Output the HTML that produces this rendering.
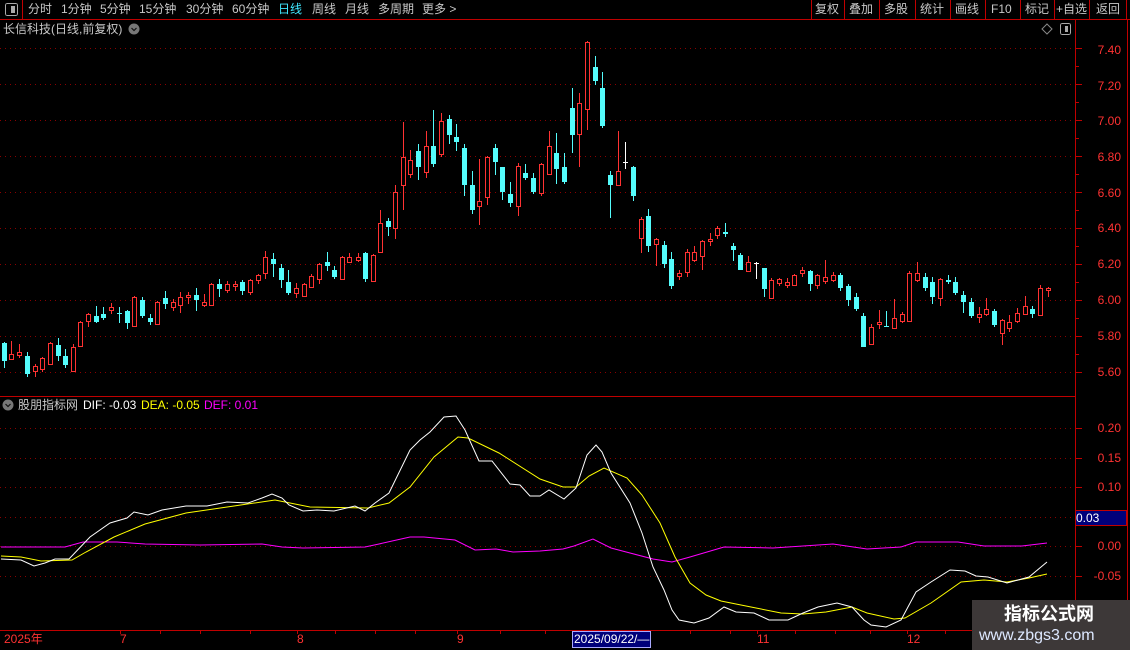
<!DOCTYPE html>
<html><head><meta charset="utf-8">
<style>
*{margin:0;padding:0;box-sizing:border-box}
body{width:1130px;height:650px;background:#000;overflow:hidden;position:relative;font-family:"Liberation Sans","Noto Sans CJK SC",sans-serif;font-size:12px;color:#c8c8c8}
.t{position:absolute;white-space:nowrap;line-height:14px}
svg{position:absolute;left:0;top:0}
.ax{position:absolute;right:9px;color:#ff3232;font-size:12px;line-height:14px}
</style></head><body>
<svg id="s" width="1130" height="650" xmlns="http://www.w3.org/2000/svg" shape-rendering="crispEdges">
<g stroke="#c00000" stroke-width="1" fill="none">
<line x1="0" y1="19.5" x2="1130" y2="19.5"/>
<line x1="0" y1="396.5" x2="1075" y2="396.5"/>
<line x1="0" y1="630.5" x2="1075" y2="630.5"/>
<line x1="1075.5" y1="20" x2="1075.5" y2="650"/>
<line x1="1127.5" y1="20" x2="1127.5" y2="650"/>
<line x1="22.5" y1="0" x2="22.5" y2="19"/>
<line x1="811.5" y1="0" x2="811.5" y2="19"/>
<line x1="844.5" y1="0" x2="844.5" y2="19"/>
<line x1="879.5" y1="0" x2="879.5" y2="19"/>
<line x1="915.5" y1="0" x2="915.5" y2="19"/>
<line x1="950.5" y1="0" x2="950.5" y2="19"/>
<line x1="985.5" y1="0" x2="985.5" y2="19"/>
<line x1="1020.5" y1="0" x2="1020.5" y2="19"/>
<line x1="1054.5" y1="0" x2="1054.5" y2="19"/>
<line x1="1089.5" y1="0" x2="1089.5" y2="19"/>
<line x1="1126.5" y1="0" x2="1126.5" y2="19"/>
</g>
<g id="grid" stroke="#8a0000" stroke-width="1" stroke-dasharray="1 4"></g>
<g id="ticks" stroke="#c00000"></g>
<g id="candles"></g>
<g fill="none" stroke-width="1" shape-rendering="auto">
<polyline stroke="#ff00ff" points="1,547 65,547 83,542 117,542 145,544 200,545 262,544 282,547 303,548 365,547 379,544 410,537 424,537 455,540 475,550 496,549 513,552 540,551 563,549 574,546 593,539 611,548 630,553 653,559 672,562 690,557 724,547 773,548 833,544 867,549 901,547 916,542 958,542 984,546 1022,546 1047,543"/>
<polyline stroke="#ffff00" points="1,556 21,557 41,561 72,560 86,552 114,537 145,524 186,513 234,506 275,500 310,507 368,508 389,503 410,487 434,457 458,437 468,438 499,453 540,479 563,487 576,487 589,476 604,468 627,478 642,495 660,523 675,557 690,583 706,595 721,601 751,607 781,613 803,614 826,612 852,607 867,613 894,619 905,618 931,603 961,582 984,580 1007,582 1029,578 1047,574"/>
<polyline stroke="#ffffff" points="1,559 21,560 34,566 45,563 55,559 69,559 90,537 110,523 127,518 134,512 148,515 162,510 186,506 207,506 227,502 248,503 262,498 272,494 282,498 289,505 303,511 317,510 334,511 355,506 365,511 375,503 389,493 410,450 420,440 430,432 444,417 456,416 465,430 479,461 492,461 510,484 520,485 530,496 540,496 549,490 564,499 576,488 587,455 596,445 602,452 611,473 630,503 642,533 653,567 664,590 672,610 679,620 694,623 709,618 724,607 736,612 754,613 769,620 788,620 803,613 818,607 837,603 852,607 864,620 871,625 886,627 901,620 916,592 931,582 950,570 965,571 976,576 988,577 1007,583 1029,577 1047,562"/>
</g>
<rect x="5.5" y="3.5" width="12" height="12" rx="2" fill="none" stroke="#aaa"/>
<rect x="11" y="6" width="4" height="7" fill="#aaa"/>
<rect x="1060.5" y="23.5" width="10" height="11" rx="2" fill="none" stroke="#aaa"/>
<rect x="1065" y="26" width="3" height="6" fill="#aaa"/>
<path d="M1047 24 L1052 29 L1047 34 L1042 29 Z" fill="none" stroke="#888" shape-rendering="auto"/>
<circle cx="134" cy="29" r="5.5" fill="#777" shape-rendering="auto"/>
<path d="M131.5 28 L134 30.5 L136.5 28" stroke="#111" stroke-width="1.2" fill="none" shape-rendering="auto"/>
<circle cx="8" cy="405" r="5.5" fill="#777" shape-rendering="auto"/>
<path d="M5.5 404 L8 406.5 L10.5 404" stroke="#111" stroke-width="1.2" fill="none" shape-rendering="auto"/>
<rect x="1075.5" y="510.5" width="51" height="15" fill="#00007a" stroke="#c00000"/>
<rect x="572.5" y="631.5" width="78" height="16" fill="#00007a" stroke="#aaaaff"/>
<rect x="972" y="600" width="158" height="50" fill="#3d3838"/>
</svg>

<div class="t" style="left:28px;top:2px">分时</div>
<div class="t" style="left:61px;top:2px">1分钟</div>
<div class="t" style="left:100px;top:2px">5分钟</div>
<div class="t" style="left:139px;top:2px">15分钟</div>
<div class="t" style="left:186px;top:2px">30分钟</div>
<div class="t" style="left:232px;top:2px">60分钟</div>
<div class="t" style="left:278px;top:2px;color:#40e8ff">日线</div>
<div class="t" style="left:312px;top:2px">周线</div>
<div class="t" style="left:345px;top:2px">月线</div>
<div class="t" style="left:378px;top:2px">多周期</div>
<div class="t" style="left:422px;top:2px">更多 &gt;</div>
<div class="t" style="left:815px;top:2px">复权</div>
<div class="t" style="left:849px;top:2px">叠加</div>
<div class="t" style="left:884px;top:2px">多股</div>
<div class="t" style="left:920px;top:2px">统计</div>
<div class="t" style="left:955px;top:2px">画线</div>
<div class="t" style="left:991px;top:2px">F10</div>
<div class="t" style="left:1025px;top:2px">标记</div>
<div class="t" style="left:1056px;top:2px">+自选</div>
<div class="t" style="left:1096px;top:2px">返回</div>
<div class="t" style="left:3px;top:22px">长信科技(日线,前复权)</div>
<div class="t" style="left:18px;top:398px">股朋指标网</div>
<div class="t" style="left:83px;top:398px;color:#fff">DIF: -0.03</div>
<div class="t" style="left:141px;top:398px;color:#ffff00">DEA: -0.05</div>
<div class="t" style="left:204px;top:398px;color:#ff00ff">DEF: 0.01</div>

<div class="ax" style="top:43px">7.40</div>
<div class="ax" style="top:79px">7.20</div>
<div class="ax" style="top:114px">7.00</div>
<div class="ax" style="top:150px">6.80</div>
<div class="ax" style="top:186px">6.60</div>
<div class="ax" style="top:221px">6.40</div>
<div class="ax" style="top:257px">6.20</div>
<div class="ax" style="top:293px">6.00</div>
<div class="ax" style="top:329px">5.80</div>
<div class="ax" style="top:365px">5.60</div>
<div class="ax" style="top:421px">0.20</div>
<div class="ax" style="top:451px">0.15</div>
<div class="ax" style="top:480px">0.10</div>
<div class="t" style="left:1076px;top:511px;color:#fff">0.03</div>
<div class="ax" style="top:539px">0.00</div>
<div class="ax" style="top:569px">-0.05</div>

<div class="t" style="left:4px;top:632px;color:#ff3232">2025年</div>
<div class="t" style="left:120px;top:632px;color:#ff3232">7</div>
<div class="t" style="left:297px;top:632px;color:#ff3232">8</div>
<div class="t" style="left:457px;top:632px;color:#ff3232">9</div>
<div class="t" style="left:574px;top:632px;color:#fff">2025/09/22/—</div>
<div class="t" style="left:757px;top:632px;color:#ff3232">11</div>
<div class="t" style="left:907px;top:632px;color:#ff3232">12</div>
<div class="t" style="left:1004px;top:603px;color:#fff;font-size:18px;font-weight:bold;line-height:22px">指标公式网</div>
<div class="t" style="left:979px;top:626px;color:#dde8ff;font-size:16px;line-height:20px">www.zbgs3.com</div>

<script>
var NS="http://www.w3.org/2000/svg";
function el(p,n,a){var e=document.createElementNS(NS,n);for(var k in a)e.setAttribute(k,a[k]);p.appendChild(e);return e;}
var g=document.getElementById('grid');
[48,84,120,156,192,228,264,300,336,372,428,458,487,517,546,576].forEach(function(y){el(g,'line',{x1:0,y1:y+.5,x2:1075,y2:y+.5});});
var tk=document.getElementById('ticks');
for(var y=48;y<=380;y+=18)el(tk,'line',{x1:1075,y1:y+.5,x2:(((y-48)/18)%2?1079:1082),y2:y+.5});
[428,458,487,517,546,576].forEach(function(y){el(tk,'line',{x1:1075,y1:y+.5,x2:1082,y2:y+.5});});
[120,160,200,250,297,335,375,415,457,500,545,572,610,650,690,730,757,795,835,870,907,945,985].forEach(function(x){el(tk,'line',{x1:x+.5,y1:630,x2:x+.5,y2:634});});
var C=[[4,343,361,342,368,'c'],[11,354,359,341,359,'r'],[19,352,355,344,358,'r'],[26.5,356,374,352,377,'c'],[34.5,366,371,364,377,'r'],[42,358,369,357,372,'r'],[49.5,343,364,342,365,'r'],[57.5,345,356,338,361,'c'],[65,356,365,349,368,'c'],[72.5,347,371,344,372,'r'],[80,322,346,321,347,'r'],[88,314,321,313,327,'r'],[95.5,316,322,306,323,'c'],[103,314,318,307,320,'c'],[111,307,310,303,314,'r'],[119,313,314,307,323,'c'],[126.5,311,323,310,329,'c'],[134,297,326,296,327,'r'],[142,300,316,297,318,'c'],[149.5,318,322,314,325,'c'],[157,302,324,301,325,'r'],[164.5,298,304,291,309,'c'],[172.5,302,307,299,311,'r'],[180,297,305,292,313,'r'],[188,295,297,292,304,'r'],[195.5,295,300,288,311,'c'],[203.5,302,305,294,307,'r'],[211,284,305,283,306,'r'],[218.5,284,289,279,297,'c'],[226.5,284,290,281,293,'r'],[234.5,284,286,281,291,'r'],[242,282,291,280,295,'c'],[249.5,280,292,279,295,'r'],[257.5,275,280,274,284,'r'],[264.5,257,273,251,279,'r'],[272.5,259,264,253,277,'c'],[280.5,268,280,264,288,'c'],[288,282,293,270,295,'c'],[295.5,288,293,283,298,'r'],[303.5,284,296,283,297,'r'],[311,276,287,274,288,'r'],[318.5,264,279,263,284,'r'],[326.5,262,266,252,271,'c'],[334,270,277,266,279,'c'],[341.5,257,279,256,280,'r'],[349,257,262,253,263,'r'],[357.5,257,260,253,262,'r'],[364.5,253,279,252,282,'c'],[372.5,255,281,254,282,'r'],[380,223,252,210,253,'r'],[387.5,221,227,218,236,'c'],[395.3,192,228,185,239,'r'],[403.3,157,185,122,210,'r'],[410.3,160,174,150,178,'r'],[418.3,151,167,144,180,'c'],[426.3,146,172,131,178,'r'],[433.3,146,164,110,167,'c'],[441.3,121,154,113,157,'r'],[449.3,119,135,115,144,'c'],[456.3,137,142,124,151,'c'],[464.3,148,185,144,196,'c'],[472.3,185,210,171,214,'c'],[479.3,201,206,159,225,'r'],[487.3,157,197,156,205,'r'],[495.3,148,162,144,175,'c'],[502.3,167,192,167,200,'c'],[510.3,194,203,182,207,'c'],[518.3,166,206,163,216,'r'],[525.3,173,178,164,180,'c'],[533.3,178,192,173,194,'c'],[541.3,164,193,163,196,'r'],[549.3,146,174,131,175,'r'],[556.3,153,169,133,184,'c'],[564.3,167,182,153,184,'c'],[572.3,108,135,88,153,'c'],[579.3,103,134,93,167,'r'],[587.3,42,109,41,130,'r'],[595.3,67,81,56,85,'c'],[602.3,88,126,72,128,'c'],[610.3,175,185,171,218,'c'],[618.3,171,185,131,185,'r'],[625.3,162,163,142,169,'w'],[633.3,167,196,166,201,'c'],[641.3,219,238,217,253,'r'],[648.3,216,246,209,252,'c'],[656.3,239,244,238,266,'r'],[664.3,245,264,241,268,'c'],[671.3,259,286,252,289,'c'],[679.3,273,276,270,280,'r'],[687.3,252,272,249,277,'r'],[694.3,252,260,246,262,'r'],[702.3,241,256,240,270,'r'],[710.3,239,241,233,246,'r'],[717.3,228,235,226,239,'r'],[725.3,232,234,223,237,'c'],[733.3,246,250,243,261,'c'],[740.3,255,270,253,270,'c'],[748.3,262,271,256,272,'r'],[756,263,264,262,279,'w'],[764.3,268,289,268,297,'c'],[771.3,280,298,278,299,'r'],[779.3,279,283,278,286,'r'],[787.3,282,285,278,288,'r'],[794.3,275,285,274,286,'r'],[802.3,270,273,267,277,'r'],[810.3,271,284,270,291,'c'],[817.3,275,285,274,289,'r'],[825.3,277,281,260,284,'r'],[833.3,275,280,272,282,'r'],[840.3,275,288,273,291,'c'],[848.3,286,300,284,306,'c'],[856.3,297,309,293,311,'c'],[863.3,316,347,313,347,'c'],[871.3,327,344,324,345,'r'],[879.3,322,324,310,329,'r'],[886.3,326,327,311,327,'c'],[894.3,318,328,299,329,'r'],[902.3,314,321,312,323,'r'],[909.3,273,321,271,322,'r'],[917.3,273,280,262,282,'r'],[925.3,277,288,273,291,'c'],[932.3,282,297,277,304,'c'],[940.3,279,298,278,306,'r'],[948.3,280,282,275,284,'c'],[955.3,282,293,277,295,'c'],[963.3,295,302,291,313,'c'],[971.3,302,316,298,318,'c'],[979.3,314,317,307,323,'r'],[986.3,309,314,298,316,'r'],[994.3,311,325,309,327,'c'],[1002.3,320,333,319,345,'r'],[1009.3,322,328,315,332,'r'],[1017.3,313,321,308,323,'r'],[1025.3,306,314,296,315,'r'],[1032.3,309,314,306,318,'c'],[1040.3,288,315,285,316,'r'],[1048.3,288,290,287,297,'r']];
var cg=document.getElementById('candles');
C.forEach(function(c){
 var x=Math.round(c[0]),col=c[5]=='c'?'#54fcfc':(c[5]=='r'?'#ff3232':'#ffffff');
 if(c[5]=='r'){
  el(cg,'line',{x1:x+.5,y1:c[3],x2:x+.5,y2:c[1],stroke:col});
  el(cg,'line',{x1:x+.5,y1:c[2],x2:x+.5,y2:c[4],stroke:col});
  el(cg,'rect',{x:x-1.5,y:c[1]+.5,width:4,height:Math.max(1,c[2]-c[1]),fill:'#000',stroke:col});
 }else{
  el(cg,'line',{x1:x+.5,y1:c[3],x2:x+.5,y2:c[4],stroke:col});
  if(c[5]=='w')el(cg,'line',{x1:x-2,y1:c[1]+.5,x2:x+3,y2:c[1]+.5,stroke:col});
  else el(cg,'rect',{x:x-2,y:c[1],width:5,height:Math.max(1,c[2]-c[1]),fill:col});
 }
});
</script>
</body></html>
